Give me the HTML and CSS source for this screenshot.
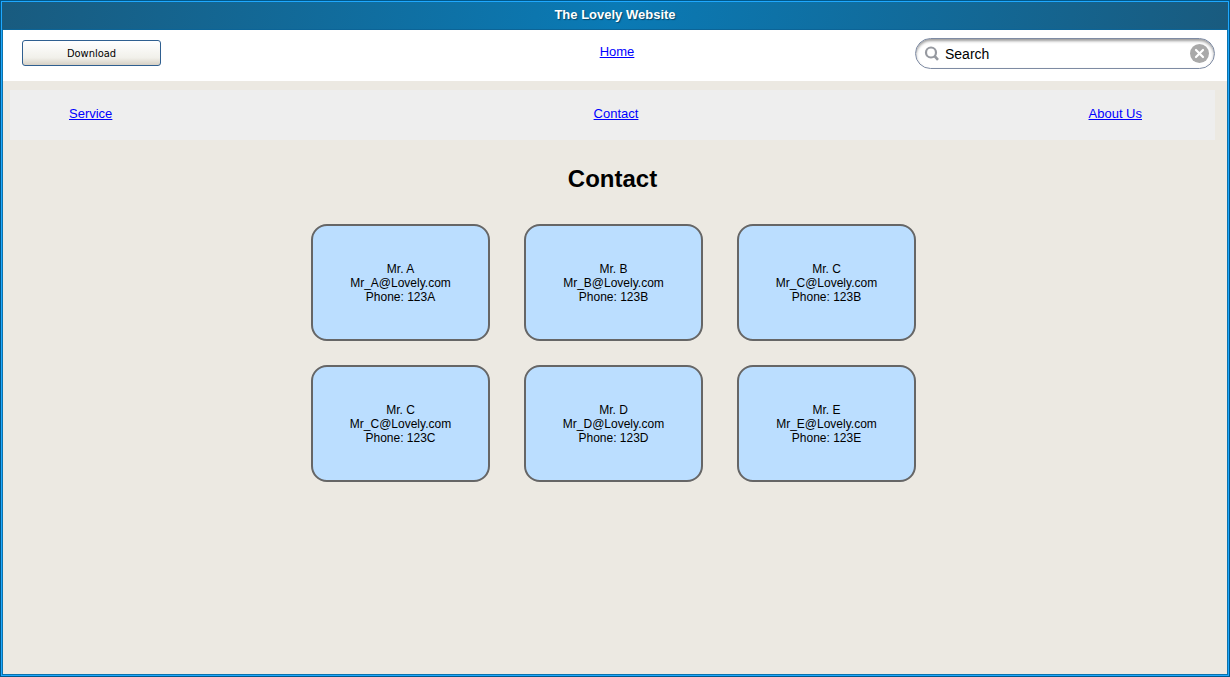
FILE: index.html
```html
<!DOCTYPE html>
<html lang="en">
<head>
<meta charset="utf-8">
<title>The Lovely Website</title>
<link rel="stylesheet" href="styles.css">
</head>
<body>
<div class="window">
  <div class="titlebar">The Lovely Website</div>
  <div class="content">
    <header class="toolbar">
      <button class="download" type="button">Download</button>
      <a class="link home" href="#home">Home</a>
      <form class="search" role="search">
        <svg class="search-icon" viewBox="0 0 16 16" aria-hidden="true"><circle cx="7" cy="6.5" r="5" fill="none" stroke="#9699a0" stroke-width="2.2"/><path d="M10.5 10L14 13.8" stroke="#9699a0" stroke-width="2.6"/></svg>
        <input class="search-input" type="text" value="Search" aria-label="Search">
        <button class="clear" type="reset" aria-label="Clear search">
          <svg class="clear-icon" viewBox="0 0 19 19" aria-hidden="true"><circle cx="9.5" cy="9.5" r="9.5" fill="#a9a9a9"/><path d="M6 6L13 13M13 6L6 13" stroke="#fff" stroke-width="2.2" stroke-linecap="round"/></svg>
        </button>
      </form>
    </header>
    <main class="page">
      <nav class="nav">
        <a class="link" href="#service">Service</a>
        <a class="link" href="#contact">Contact</a>
        <a class="link about" href="#about">About Us</a>
      </nav>
      <h1 class="heading">Contact</h1>
      <div class="cards">
        <article class="card">Mr. A<br>Mr_A@Lovely.com<br>Phone: 123A</article>
        <article class="card">Mr. B<br>Mr_B@Lovely.com<br>Phone: 123B</article>
        <article class="card">Mr. C<br>Mr_C@Lovely.com<br>Phone: 123B</article>
        <article class="card">Mr. C<br>Mr_C@Lovely.com<br>Phone: 123C</article>
        <article class="card">Mr. D<br>Mr_D@Lovely.com<br>Phone: 123D</article>
        <article class="card">Mr. E<br>Mr_E@Lovely.com<br>Phone: 123E</article>
      </div>
    </main>
  </div>
</div>
</body>
</html>
```
FILE: styles.css
```css
* {
  box-sizing: border-box;
}

body {
  margin: 0;
  font-family: "Liberation Sans", Arial, sans-serif;
  color: #000;
}

.window {
  display: flex;
  flex-direction: column;
  min-height: 100vh;
  padding: 1px;
  border: 1px solid #00588a;
  background: #1ea8ff;
}

.titlebar {
  height: 28px;
  border-bottom: 1px solid #0c6497;
  background: linear-gradient(100deg, #195b7f, #0a7ab5 50%, #195b7f);
  color: #fff;
  font-size: 13px;
  font-weight: bold;
  line-height: 25px;
  text-align: center;
  text-shadow: 1px 1px 1px #064568;
}

.content {
  flex: 1;
  border: 1px solid #0a73ad;
  border-top: 0;
  background: #ece9e2;
}

.toolbar {
  display: grid;
  grid-template-columns: 1fr auto 1fr;
  align-items: center;
  padding: 8px 12px 12px 16px;
  background: #fff;
}

.link {
  color: #00f;
  font-size: 13px;
  line-height: 15px;
}

.home {
  padding-bottom: 5px;
}

.download {
  width: 139px;
  height: 26px;
  margin: 0 0 1px 3px;
  padding: 0;
  border: 1px solid #2f5f90;
  border-radius: 3px;
  background: linear-gradient(#fff, #f1f0ea 70%, #d6d0c5);
  color: #000;
  font-family: "DejaVu Sans Condensed", "Open Sans", sans-serif;
  font-size: 11px;
}

.search {
  display: flex;
  align-items: center;
  justify-self: end;
  width: 300px;
  height: 31px;
  padding: 0 5px 0 8px;
  border: 1px solid #7e8ba3;
  border-radius: 16px;
  background: #fff;
  box-shadow: inset 0 2px 3px #999;
}

.search-icon {
  width: 16px;
  height: 16px;
}

.search-input {
  flex: 1;
  min-width: 0;
  padding: 0 5px;
  border: 0;
  background: transparent;
  color: #000;
  font: 14px/16px "Liberation Sans", Arial, sans-serif;
}

.clear {
  width: 19px;
  height: 19px;
  padding: 0;
  border: 0;
  background: none;
}

.clear-icon {
  display: block;
}

.page {
  padding: 9px 12px 24px 7px;
}

.nav {
  display: grid;
  grid-template-columns: 1fr auto 1fr;
  align-items: center;
  height: 50px;
  padding: 0 52px 4px 59px;
  background: #eee;
}

.about {
  justify-self: end;
  margin-right: 21px;
}

.heading {
  margin: 25px 0 31px;
  font-size: 24px;
  line-height: 28px;
  text-align: center;
}

.cards {
  display: grid;
  grid-template-columns: repeat(3, 179px);
  justify-content: center;
  gap: 24px 34px;
  padding-left: 2px;
}

.card {
  display: grid;
  place-content: center;
  min-height: 117px;
  border: 2px solid #666;
  border-radius: 16px;
  background: #bbdeff;
  font-size: 12px;
  line-height: 14px;
  text-align: center;
}
```
